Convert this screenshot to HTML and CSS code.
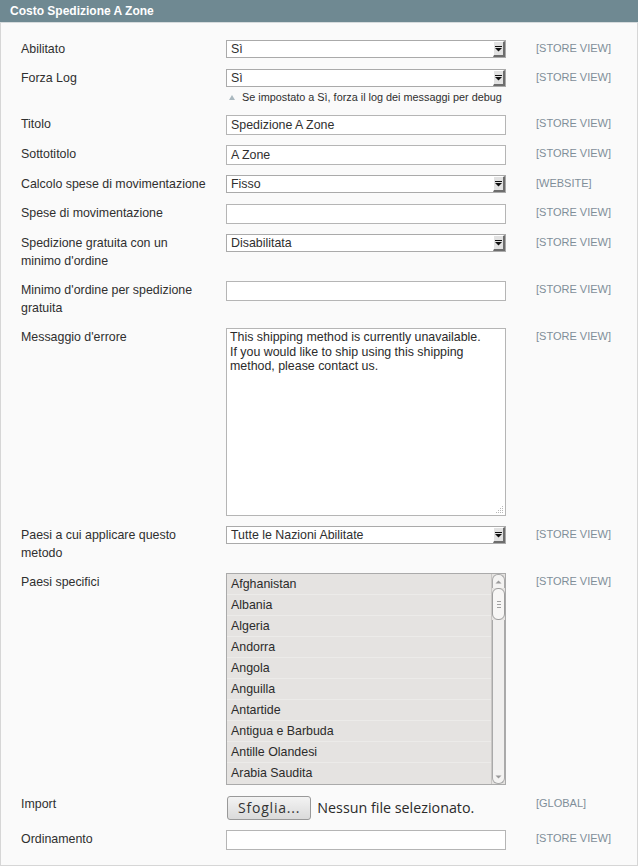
FILE: index.html
```html
<!DOCTYPE html>
<html>
<head>
<meta charset="utf-8">
<link rel="stylesheet" href="styles.css">
</head>
<body>
<div class="section">
  <div class="head">Costo Spedizione A Zone</div>
  <div class="fieldset">
    <div class="row">
      <div class="label">Abilitato</div>
      <div class="value"><div class="select"><span class="sel-text">Sì</span><span class="arrow"><svg width="7" height="6" viewBox="0 0 7 6"><rect x="0" y="0" width="7" height="1" fill="#111"/><path d="M0 2h7L3.5 5.5z" fill="#111"/></svg></span></div></div>
      <div class="scope">[STORE VIEW]</div>
    </div>
    <div class="row">
      <div class="label">Forza Log</div>
      <div class="value"><div class="select"><span class="sel-text">Sì</span><span class="arrow"><svg width="7" height="6" viewBox="0 0 7 6"><rect x="0" y="0" width="7" height="1" fill="#111"/><path d="M0 2h7L3.5 5.5z" fill="#111"/></svg></span></div>
        <div class="note"><svg class="tri" width="6" height="5" viewBox="0 0 6 5"><path d="M0 5L3 0L6 5z" fill="#aab8bf"/></svg><span>Se impostato a Sì, forza il log dei messaggi per debug</span></div></div>
      <div class="scope">[STORE VIEW]</div>
    </div>
    <div class="row">
      <div class="label">Titolo</div>
      <div class="value"><div class="input">Spedizione A Zone</div></div>
      <div class="scope">[STORE VIEW]</div>
    </div>
    <div class="row">
      <div class="label">Sottotitolo</div>
      <div class="value"><div class="input">A Zone</div></div>
      <div class="scope">[STORE VIEW]</div>
    </div>
    <div class="row">
      <div class="label">Calcolo spese di movimentazione</div>
      <div class="value"><div class="select"><span class="sel-text">Fisso</span><span class="arrow"><svg width="7" height="6" viewBox="0 0 7 6"><rect x="0" y="0" width="7" height="1" fill="#111"/><path d="M0 2h7L3.5 5.5z" fill="#111"/></svg></span></div></div>
      <div class="scope">[WEBSITE]</div>
    </div>
    <div class="row">
      <div class="label">Spese di movimentazione</div>
      <div class="value"><div class="input"></div></div>
      <div class="scope">[STORE VIEW]</div>
    </div>
    <div class="row">
      <div class="label">Spedizione gratuita con un minimo d'ordine</div>
      <div class="value"><div class="select"><span class="sel-text">Disabilitata</span><span class="arrow"><svg width="7" height="6" viewBox="0 0 7 6"><rect x="0" y="0" width="7" height="1" fill="#111"/><path d="M0 2h7L3.5 5.5z" fill="#111"/></svg></span></div></div>
      <div class="scope">[STORE VIEW]</div>
    </div>
    <div class="row">
      <div class="label">Minimo d'ordine per spedizione gratuita</div>
      <div class="value"><div class="input"></div></div>
      <div class="scope">[STORE VIEW]</div>
    </div>
    <div class="row">
      <div class="label">Messaggio d'errore</div>
      <div class="value"><div class="textarea">This shipping method is currently unavailable. If you would like to ship using this shipping method, please contact us.<svg class="grip" width="9" height="9" viewBox="0 0 9 9"><g fill="#b8b8b8"><rect x="7" y="1" width="1" height="1"/><rect x="5" y="3" width="1" height="1"/><rect x="7" y="3" width="1" height="1"/><rect x="3" y="5" width="1" height="1"/><rect x="5" y="5" width="1" height="1"/><rect x="7" y="5" width="1" height="1"/><rect x="1" y="7" width="1" height="1"/><rect x="3" y="7" width="1" height="1"/><rect x="5" y="7" width="1" height="1"/><rect x="7" y="7" width="1" height="1"/></g></svg></div></div>
      <div class="scope">[STORE VIEW]</div>
    </div>
    <div class="row">
      <div class="label">Paesi a cui applicare questo metodo</div>
      <div class="value"><div class="select"><span class="sel-text">Tutte le Nazioni Abilitate</span><span class="arrow"><svg width="7" height="6" viewBox="0 0 7 6"><rect x="0" y="0" width="7" height="1" fill="#111"/><path d="M0 2h7L3.5 5.5z" fill="#111"/></svg></span></div></div>
      <div class="scope">[STORE VIEW]</div>
    </div>
    <div class="row">
      <div class="label">Paesi specifici</div>
      <div class="value">
        <div class="multi">
          <ul class="opts">
            <li>Afghanistan</li>
            <li>Albania</li>
            <li>Algeria</li>
            <li>Andorra</li>
            <li>Angola</li>
            <li>Anguilla</li>
            <li>Antartide</li>
            <li>Antigua e Barbuda</li>
            <li>Antille Olandesi</li>
            <li>Arabia Saudita</li>
          </ul>
          <div class="sbar">
            <div class="sb-up"><svg width="7" height="4" viewBox="0 0 7 4"><path d="M0.5 3.5L3.5 0.5L6.5 3.5z" fill="#9a9a9a"/></svg></div>
            <div class="sb-thumb"><span></span><span></span><span></span></div>
            <div class="sb-track"></div>
            <div class="sb-down"><svg width="7" height="4" viewBox="0 0 7 4"><path d="M0.5 0.5L3.5 3.5L6.5 0.5z" fill="#9a9a9a"/></svg></div>
          </div>
        </div>
      </div>
      <div class="scope">[STORE VIEW]</div>
    </div>
    <div class="row">
      <div class="label">Import</div>
      <div class="value file-row"><span class="btn">Sfoglia...</span><span class="nofile">Nessun file selezionato.</span></div>
      <div class="scope">[GLOBAL]</div>
    </div>
    <div class="row">
      <div class="label">Ordinamento</div>
      <div class="value"><div class="input"></div></div>
      <div class="scope">[STORE VIEW]</div>
    </div>
  </div>
</div>
</body>
</html>
```
FILE: styles.css
```css
html, body {
  margin: 0;
  padding: 0;
  background: #fff;
}
body {
  font-family: "Liberation Sans", Arial, sans-serif;
  font-size: 12.4px;
  color: #2f2f2f;
}
.section {
  width: 638px;
}
.head {
  background: #6f8992;
  color: #fff;
  font-weight: bold;
  font-size: 12px;
  height: 23px;
  line-height: 23px;
  padding-left: 10px;
  border-bottom: 1px solid #d6dbdd;
  box-sizing: border-box;
}
.fieldset {
  background: #fafafa;
  border: 1px solid #d6d6d6;
  border-top: 0;
  padding: 12px 0 13px 20px;
  height: 843px;
  box-sizing: border-box;
}
.row {
  display: grid;
  grid-template-columns: 205px 280px 1fr;
  padding: 5px 0;
}
.label {
  line-height: 18px;
  padding-bottom: 1px;
  padding-right: 19px;
}
.scope {
  font-size: 11px;
  color: #7f8e99;
  line-height: 16px;
  padding-left: 30px;
}
.select {
  height: 18px;
  border: 1px solid #aaa;
  background: #fff;
  box-sizing: border-box;
  display: flex;
  align-items: stretch;
}
.sel-text {
  flex: 1;
  line-height: 16px;
  padding-left: 4px;
  color: #2f2f2f;
}
.arrow {
  width: 12px;
  background: #e2e2e2;
  border-left: 1px solid #fff;
  border-top: 1px solid #fff;
  border-right: 2px solid #6d6d6d;
  border-bottom: 2px solid #6d6d6d;
  box-sizing: border-box;
  display: flex;
  align-items: center;
  justify-content: center;
}
.arrow svg {
  display: block;
}
.note {
  display: flex;
  align-items: center;
  height: 16px;
  margin-top: 2px;
  font-size: 10.85px;
  color: #2f2f2f;
}
.tri {
  display: block;
  margin: 0 7px 0 3px;
}
.input {
  height: 20px;
  border: 1px solid #b5b5b5;
  background: #fff;
  box-sizing: border-box;
  line-height: 18px;
  padding-left: 4px;
}
.textarea {
  position: relative;
  height: 188px;
  border: 1px solid #b5b5b5;
  background: #fff;
  box-sizing: border-box;
  line-height: 14.5px;
  padding: 1px 20px 0 3px;
  color: #2b2b2b;
}
.grip {
  position: absolute;
  right: 1px;
  bottom: 1px;
}
.multi {
  height: 212px;
  border: 1px solid #aaa;
  background: #e5e3e1;
  box-sizing: border-box;
  display: flex;
}
.opts {
  flex: 1;
  list-style: none;
  margin: 0;
  padding: 0;
}
.opts li {
  height: 21px;
  line-height: 20px;
  padding-left: 4px;
  border-bottom: 1px solid #ecebe9;
  box-sizing: border-box;
  color: #2b2b2b;
}
.opts li:last-child {
  border-bottom: 0;
}
.sbar {
  width: 13px;
  display: flex;
  flex-direction: column;
  background: #e5e3e1;
  border-left: 1px solid #c9c7c5;
}
.sb-up, .sb-down {
  height: 14px;
  background: #f4f3f2;
  border: 1px solid #a9a9a9;
  box-sizing: border-box;
  display: flex;
  align-items: center;
  justify-content: center;
}
.sb-up {
  border-radius: 6px 6px 0 0;
  border-bottom: 0;
}
.sb-down {
  border-radius: 0 0 6px 6px;
  border-top: 0;
}
.sb-thumb {
  height: 32px;
  background: #f7f6f5;
  border: 1px solid #9d9d9d;
  border-radius: 6px;
  box-sizing: border-box;
  display: flex;
  flex-direction: column;
  align-items: center;
  justify-content: center;
  gap: 2px;
}
.sb-thumb span {
  width: 4px;
  height: 1px;
  background: #a0a0a0;
}
.sb-track {
  flex: 1;
  border-left: 1px solid #a9a9a9;
  border-right: 1px solid #a9a9a9;
  background: #f0efee;
}
.file-row {
  display: flex;
  align-items: flex-start;
  height: 25px;
}
.btn {
  font-family: "Open Sans", "DejaVu Sans", sans-serif;
  font-size: 14px;
  letter-spacing: 0.8px;
  color: #333;
  height: 24px;
  line-height: 22px;
  box-sizing: border-box;
  padding: 0 10px 0 10px;
  border: 1px solid #999;
  border-radius: 3px;
  background: linear-gradient(#f3f3f3, #dadada);
  margin: 1px 0 0 1px;
}
.nofile {
  font-family: "Open Sans", "DejaVu Sans", sans-serif;
  font-size: 14.3px;
  color: #2b2b2b;
  margin: 3px 0 0 6px;
  line-height: 20px;
}
```
